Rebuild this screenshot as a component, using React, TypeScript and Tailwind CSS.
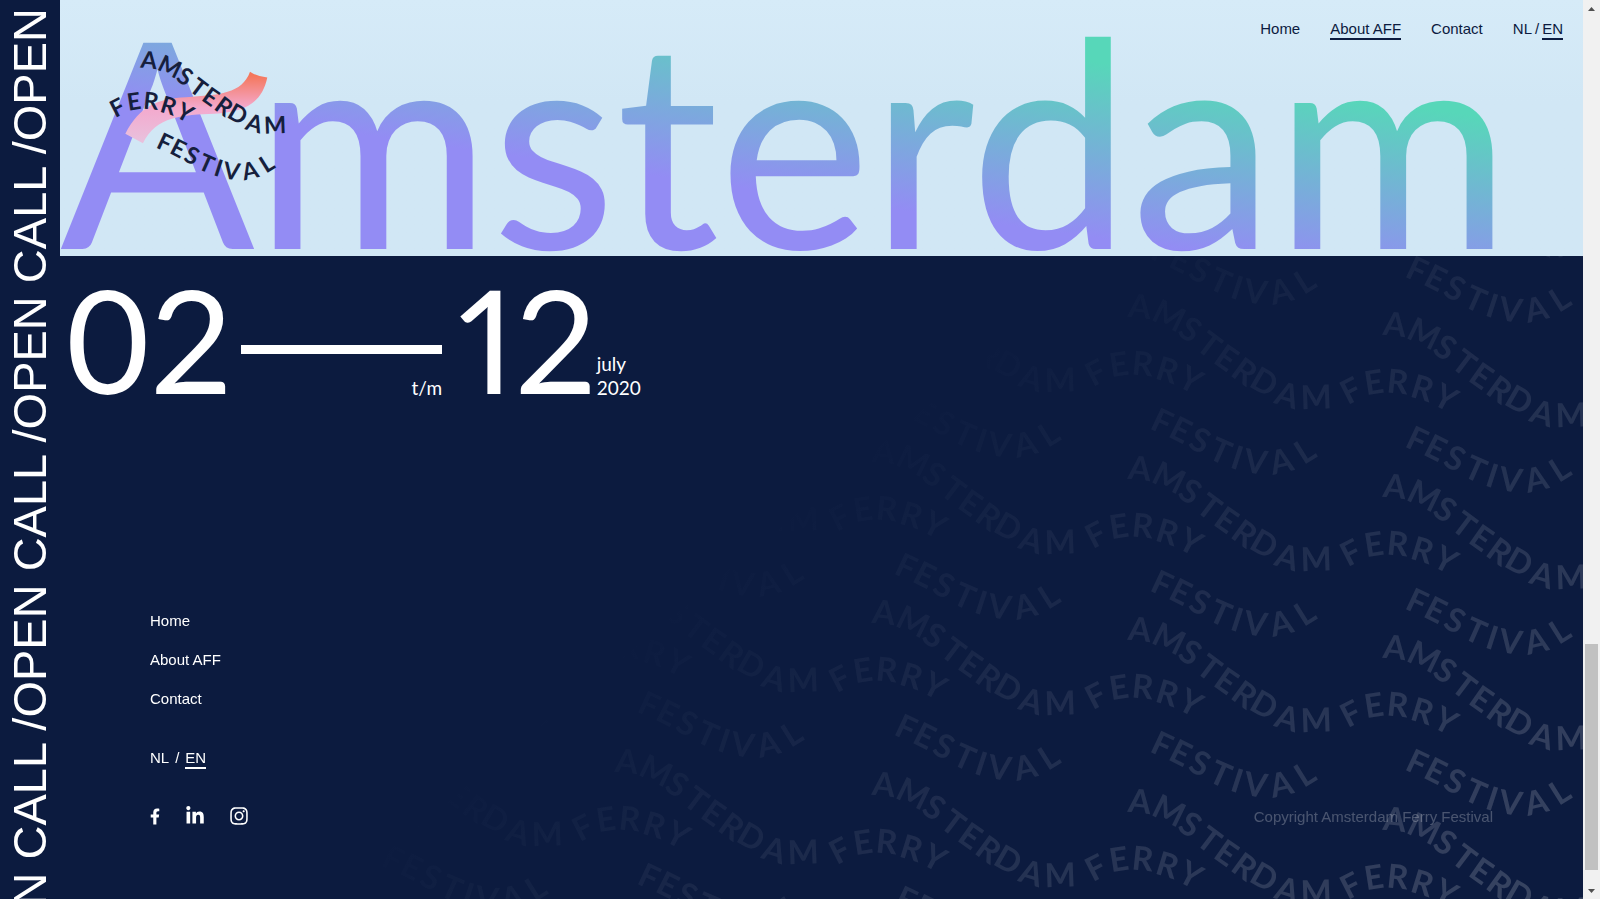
import React from "react";
import { FaFacebookF, FaInstagram, FaLinkedinIn } from "react-icons/fa";

type Glyph = [char: string, cx: number, cy: number, angle: number];

const FONT_SIZE = 99;
const CAP_HEIGHT = 0.72;

const ADVANCE: Record<string, number> = {
  A: 0.68, D: 0.76, E: 0.58, F: 0.56, I: 0.28, L: 0.47, M: 0.91,
  R: 0.63, S: 0.55, T: 0.59, V: 0.68, Y: 0.64,
};

const AMSTERDAM: Glyph[] = [
  ["A", 119, 168, 6], ["M", 206, 196, 26], ["S", 272, 238, 34], ["T", 328, 284, 37],
  ["E", 380, 323, 35], ["R", 434, 363, 36], ["D", 493, 395, 30], ["A", 562, 434, 17],
  ["M", 647, 441, -2],
];

const FERRY: Glyph[] = [
  ["F", -13, 368, -27], ["E", 57, 342, -9], ["R", 128, 341, 6], ["R", 202, 360, 17],
  ["Y", 272, 388, 28],
];

const FESTIVAL: Glyph[] = [
  ["F", 186, 514, 25], ["E", 243, 539, 27], ["S", 300, 570, 26], ["T", 361, 602, 24],
  ["I", 411, 622, 18], ["V", 466, 634, 8], ["A", 543, 633, -13], ["L", 612, 603, -32],
];

function WaveWord({ glyphs }: { glyphs: Glyph[] }) {
  const origins = glyphs.map(([char, cx, cy, angle]) => {
    const rad = (angle * Math.PI) / 180;
    const dx = (-ADVANCE[char] * FONT_SIZE) / 2;
    const dy = (CAP_HEIGHT * FONT_SIZE) / 2;
    return {
      x: Math.round(cx + dx * Math.cos(rad) - dy * Math.sin(rad)),
      y: Math.round(cy + dx * Math.sin(rad) + dy * Math.cos(rad)),
    };
  });
  return (
    <text
      x={origins.map((o) => o.x).join(" ")}
      y={origins.map((o) => o.y).join(" ")}
      rotate={glyphs.map((g) => g[3]).join(" ")}
      fontSize={FONT_SIZE}
    >
      {glyphs.map((g) => g[0]).join("")}
    </text>
  );
}

function Wordmark() {
  return (
    <>
      <WaveWord glyphs={AMSTERDAM} />
      <WaveWord glyphs={FERRY} />
      <WaveWord glyphs={FESTIVAL} />
    </>
  );
}

function Logo() {
  return (
    <svg viewBox="-65 127 772 556" className="w-[184px] overflow-visible font-['Lato',sans-serif] font-bold" role="img" aria-label="Amsterdam Ferry Festival">
      <defs>
        <linearGradient id="ribbon" x1="0" y1="126" x2="0" y2="341" gradientUnits="userSpaceOnUse">
          <stop offset="0.05" stopColor="#f4775c" />
          <stop offset="0.5" stopColor="#f4a9cd" />
          <stop offset="1" stopColor="#e8c2de" />
        </linearGradient>
      </defs>
      <path
        transform="translate(-129 43) scale(1.395)"
        fill="url(#ribbon)"
        d="M107 312C150 228 205 206 290 202C390 196 458 192 482 126Q505 141 534 143C517 222 465 246 375 252C280 256 200 258 160 341Z"
      />
      <g fill="#161f3d">
        <Wordmark />
      </g>
    </svg>
  );
}

const PATTERN_COLUMNS = [
  { x: 1385, shift: 0 },
  { x: 1130, shift: -18 },
  { x: 874, shift: -35 },
  { x: 617, shift: -58 },
  { x: 361, shift: -76 },
];
const PATTERN_ROWS = [165, 335, 497, 658, 830];

function WavePattern() {
  return (
    <svg
      viewBox="60 256 1523 643"
      preserveAspectRatio="xMaxYMin slice"
      className="pointer-events-none absolute inset-0 h-full w-full font-['Lato',sans-serif] font-bold"
      aria-hidden="true"
    >
      <defs>
        <linearGradient id="fade" x1="1095" y1="235" x2="1590" y2="835" gradientUnits="userSpaceOnUse">
          <stop offset="0" stopColor="#fff" stopOpacity="0" />
          <stop offset="1" stopColor="#fff" stopOpacity="0.18" />
        </linearGradient>
        <mask id="fade-mask" maskUnits="userSpaceOnUse" x="60" y="256" width="1523" height="643">
          <rect x="60" y="256" width="1523" height="643" fill="url(#fade)" />
        </mask>
      </defs>
      <g mask="url(#fade-mask)" fill="#fff">
        {PATTERN_COLUMNS.map(({ x, shift }) =>
          PATTERN_ROWS.map((y) => (
            <g key={`${x}-${y}`} transform={`translate(${x - 30} ${y + shift - 67}) scale(0.3333)`}>
              <Wordmark />
            </g>
          )),
        )}
      </g>
    </svg>
  );
}

function OpenCallStrip() {
  return (
    <aside className="flex w-[60px] shrink-0 items-start justify-center overflow-hidden bg-[#0c1b3f] pt-2">
      <a
        href="#open-call"
        className="rotate-180 text-[47px] leading-[60px] whitespace-pre text-white [writing-mode:vertical-rl]"
      >
        {"OPEN CALL /OPEN CALL /OPEN CALL /OPEN CALL /OPEN"}
      </a>
    </aside>
  );
}

function TopNav() {
  return (
    <nav className="absolute top-5 right-5 flex gap-[30px] text-[15px] leading-[18px] text-[#0c1b3f]" aria-label="Main">
      <a href="#home">Home</a>
      <a href="#about" className="border-b-2 border-[#0c1b3f]">About AFF</a>
      <a href="#contact">Contact</a>
      <div className="flex gap-[3px]">
        <a href="#nl">NL</a>
        <span>/</span>
        <a href="#en" className="border-b-2 border-[#0c1b3f]">EN</a>
      </div>
    </nav>
  );
}

function Hero() {
  return (
    <header className="relative h-64 overflow-hidden bg-linear-to-b from-[#d6ebf8] to-[#d1e7f5] to-40%">
      <h1 className="bg-[linear-gradient(8deg,#938cf4_172px,#57d7b9_346px)] bg-clip-text pt-2.5 font-['Lato',sans-serif] text-[18vw] leading-[256px] whitespace-nowrap text-transparent">
        Amsterdam
      </h1>
      <a href="#home" className="absolute top-[50px] left-[45px]">
        <Logo />
      </a>
      <TopNav />
    </header>
  );
}

function Dates() {
  return (
    <div className="flex items-stretch pt-[30px] pl-1.5 font-['Lato',sans-serif] text-white">
      <span className="pb-2 text-[144px] leading-[106px]">02</span>
      <div className="ml-2 flex w-[201px] flex-col items-end justify-between pt-[59px]">
        <span className="h-[9px] w-full shrink-0 bg-white" />
        <span className="text-[19px] leading-6">t/m</span>
      </div>
      <span className="ml-4 text-[144px] leading-[106px] proportional-nums">12</span>
      <div className="flex flex-col justify-end text-[19px] leading-6">
        <span>july</span>
        <span>2020</span>
      </div>
    </div>
  );
}

function FooterLinks() {
  return (
    <div className="flex flex-col text-[15px] leading-[19px] text-white">
      <nav className="flex flex-col items-start gap-5" aria-label="Footer">
        <a href="#home">Home</a>
        <a href="#about">About AFF</a>
        <a href="#contact">Contact</a>
      </nav>
      <div className="mt-10 flex gap-1.5">
        <a href="#nl">NL</a>
        <span>/</span>
        <a href="#en" className="border-b-2 border-white">EN</a>
      </div>
      <div className="mt-[37px] flex items-center gap-[26px]">
        <a href="#facebook" aria-label="Facebook"><FaFacebookF className="h-[17px] w-2.5" /></a>
        <a href="#linkedin" aria-label="LinkedIn"><FaLinkedinIn className="h-5 w-[18px]" /></a>
        <a href="#instagram" aria-label="Instagram"><FaInstagram className="h-5 w-[18px]" /></a>
      </div>
    </div>
  );
}

function Scrollbar() {
  return (
    <div className="flex w-[17px] shrink-0 flex-col items-center bg-[#f1f1f1]" aria-hidden="true">
      <svg viewBox="0 0 17 17" className="h-[17px] w-[17px]">
        <path d="M5 11L8.5 7L12 11Z" fill="#505050" />
      </svg>
      <div className="flex w-[13px] grow flex-col pb-3">
        <div className="grow-[627]" />
        <div className="grow-[226] bg-[#c1c1c1]" />
      </div>
      <svg viewBox="0 0 17 17" className="h-[17px] w-[17px]">
        <path d="M5 7L8.5 11L12 7Z" fill="#505050" />
      </svg>
    </div>
  );
}

export default function App() {
  return (
    <div className="flex h-screen overflow-hidden bg-[#0c1b3f] font-['Liberation_Sans',Arial,sans-serif]">
      <OpenCallStrip />
      <div className="flex min-w-0 grow flex-col">
        <Hero />
        <footer className="relative flex grow flex-col justify-between overflow-hidden bg-[#0c1b3f]">
          <WavePattern />
          <Dates />
          <div className="relative flex items-end justify-between pr-[90px] pb-[73px] pl-[90px]">
            <FooterLinks />
            <p className="text-[15px] leading-[18px] text-white/25">Copyright Amsterdam Ferry Festival</p>
          </div>
        </footer>
      </div>
      <Scrollbar />
    </div>
  );
}
